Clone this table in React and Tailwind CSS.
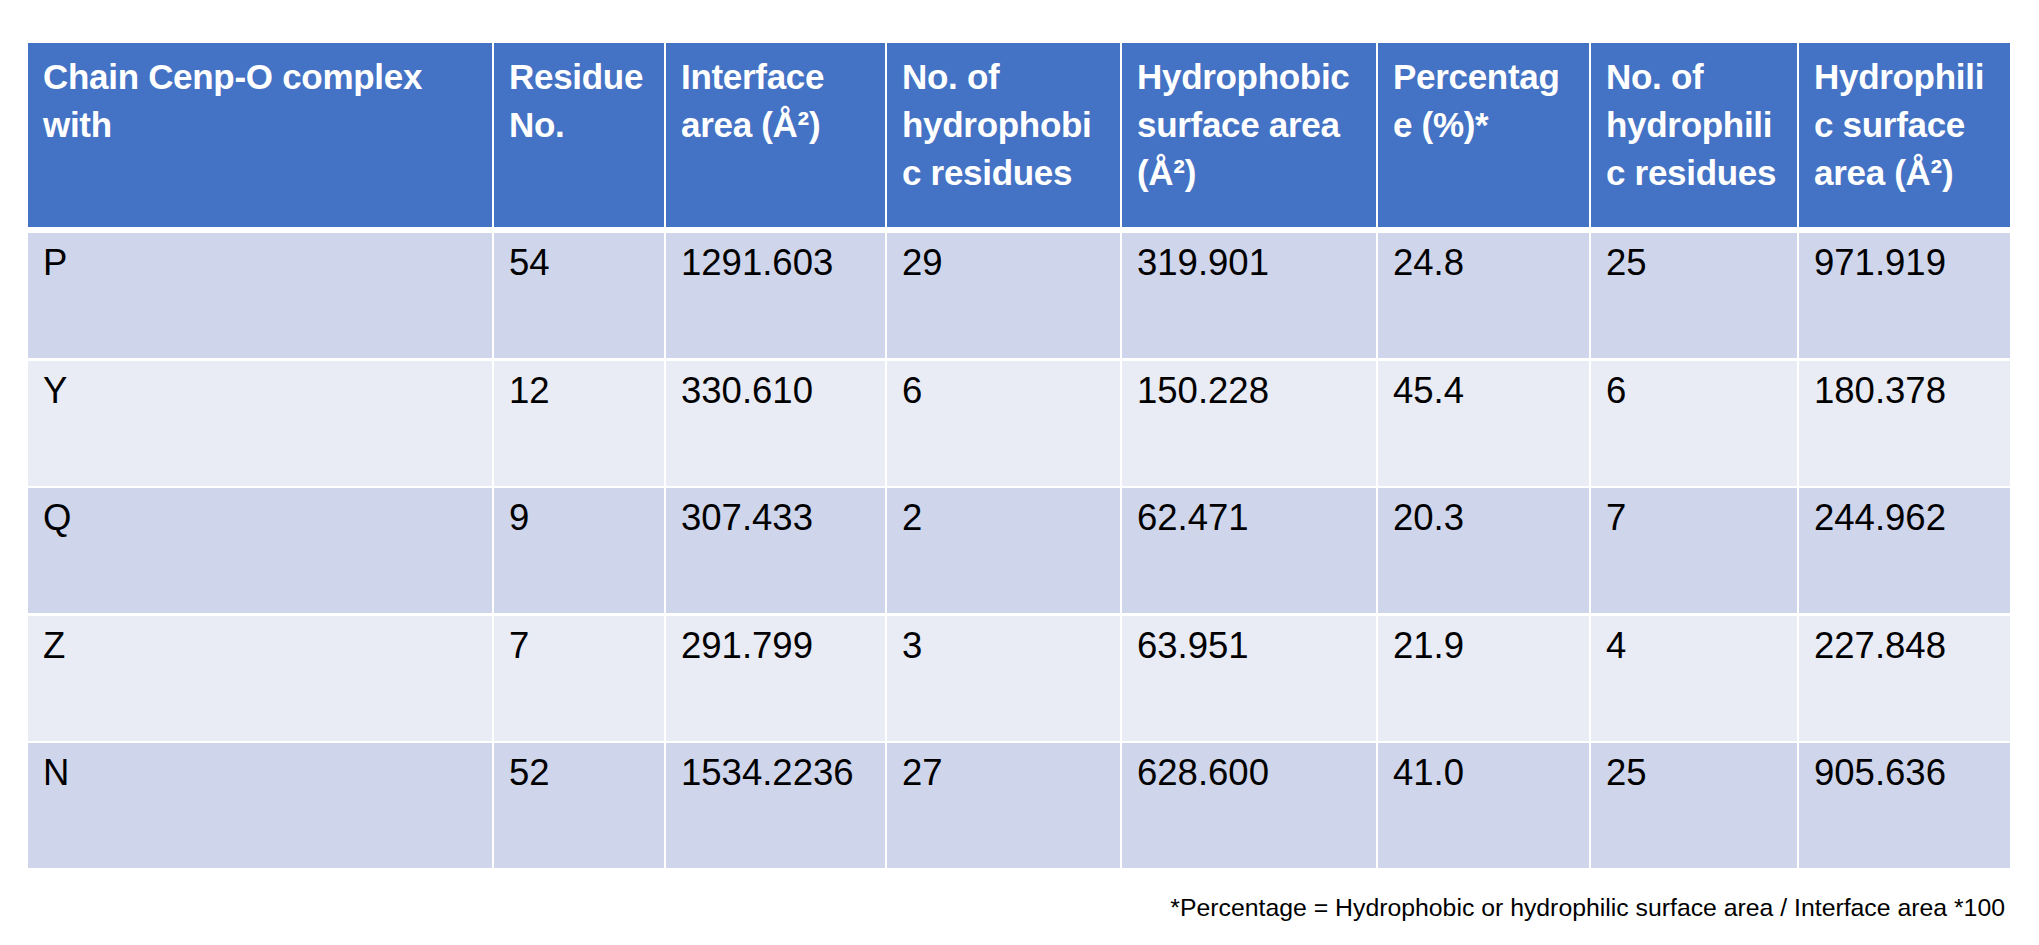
import React from 'react';

const headers = [
  ['Chain Cenp-O complex', 'with'],
  ['Residue', 'No.'],
  ['Interface', 'area (Å²)'],
  ['No. of', 'hydrophobi', 'c residues'],
  ['Hydrophobic', 'surface area', '(Å²)'],
  ['Percentag', 'e (%)*'],
  ['No. of', 'hydrophili', 'c residues'],
  ['Hydrophili', 'c surface', 'area (Å²)'],
];

const rows = [
  ['P', '54', '1291.603', '29', '319.901', '24.8', '25', '971.919'],
  ['Y', '12', '330.610', '6', '150.228', '45.4', '6', '180.378'],
  ['Q', '9', '307.433', '2', '62.471', '20.3', '7', '244.962'],
  ['Z', '7', '291.799', '3', '63.951', '21.9', '4', '227.848'],
  ['N', '52', '1534.2236', '27', '628.600', '41.0', '25', '905.636'],
];

const gridCols =
  'grid grid-cols-[464px_170px_219px_233px_254px_211px_206px_211px] gap-x-[2px]';

export default function App() {
  return (
    <div
      className="w-[2039px] h-[945px] bg-white pt-[43px] pl-[28px] overflow-hidden"
      style={{ fontFamily: '"Liberation Sans", Arial, sans-serif' }}
    >
      <div className="w-[1982px]">
        {/* header */}
        <div className={gridCols}>
          {headers.map((lines, i) => (
            <div
              key={i}
              className="h-[184px] bg-[#4472c4] pl-[15px] pt-[10px] text-white font-bold text-[35px] tracking-[-0.3px] leading-[48px] whitespace-nowrap"
            >
              {lines.map((l, j) => (
                <div key={j}>{l}</div>
              ))}
            </div>
          ))}
        </div>

        {/* body */}
        <div className="mt-[6px] flex flex-col gap-[2.5px]">
          {rows.map((row, r) => (
            <div key={r} className={gridCols}>
              {row.map((cell, c) => (
                <div
                  key={c}
                  className={
                    'h-[125px] pl-[15px] pt-[6px] text-[36.5px] leading-[48px] text-black whitespace-nowrap ' +
                    (r % 2 === 0 ? 'bg-[#cfd5ea]' : 'bg-[#e9ebf5]')
                  }
                >
                  {cell}
                </div>
              ))}
            </div>
          ))}
        </div>

        <div className="mt-[26px] flex justify-end pr-[5px]">
          <p className="text-[24.8px] leading-[28px] text-black whitespace-nowrap">
            *Percentage = Hydrophobic or hydrophilic surface area / Interface area *100
          </p>
        </div>
      </div>
    </div>
  );
}
